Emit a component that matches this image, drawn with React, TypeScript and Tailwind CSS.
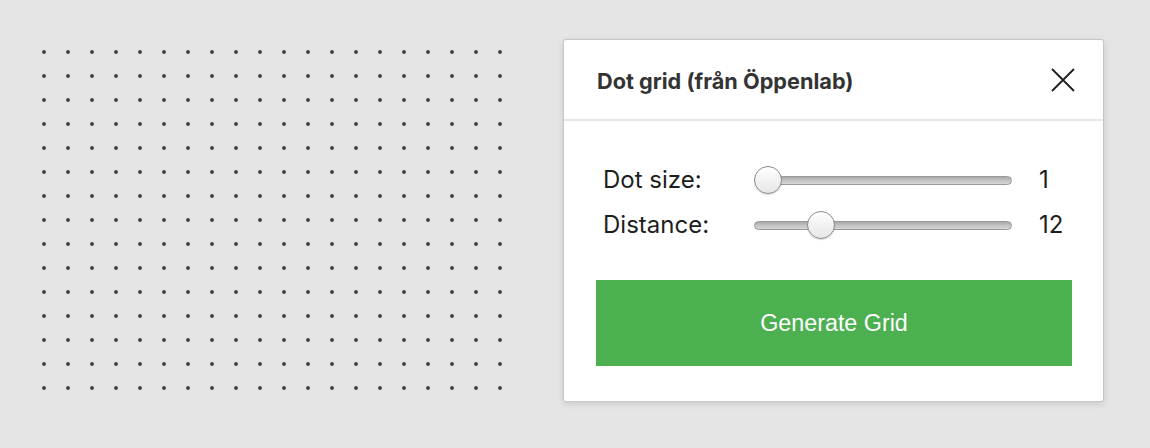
import React from "react";

const COLS = 20;
const ROWS = 15;

function Slider({ offset }: { offset: number }) {
  return (
    <div className="relative w-[258px] h-[28px] flex items-center">
      <div className="w-full h-[9px] rounded-full border border-[#9a9a9a] bg-linear-to-b from-[#a9a9a9] via-[#c4c4c4] to-[#d6d6d6]" />
      <div
        className="absolute top-0 w-[28px] h-[28px] rounded-full border-[1.5px] border-[#8c8c8c] bg-linear-to-b from-[#ffffff] to-[#e6e6e6] shadow-[0_1px_1px_rgba(0,0,0,0.15)]"
        style={{ left: offset }}
      />
    </div>
  );
}

export default function App() {
  const dots = Array.from({ length: COLS * ROWS });
  return (
    <div
      className="w-[1150px] h-[448px] bg-[#e5e5e5] flex items-start overflow-hidden"
      style={{ fontFamily: "Inter, 'Noto Sans', sans-serif" }}
    >
      <div className="pl-[42px] pt-[50px]">
        <div className="grid grid-cols-[repeat(20,24px)] grid-rows-[repeat(15,24px)]">
          {dots.map((_, i) => (
            <div key={i} className="w-[4px] h-[4px] rounded-full bg-[#464646]" />
          ))}
        </div>
      </div>

      <div className="ml-[41px] mt-[39px] w-[541px] h-[363px] bg-white border border-[#c6c6c6] rounded-[3px] shadow-[0_2px_6px_rgba(0,0,0,0.12)] flex flex-col">
        <div className="h-[81px] flex items-center justify-between pl-[33px] pr-[28px] border-b-2 border-[#e6e6e6] shrink-0">
          <div className="text-[21.7px] font-bold text-[#333333] pt-[3px]">
            Dot grid (från Öppenlab)
          </div>
          <svg width="24" height="24" viewBox="0 0 24 24" className="block">
            <path d="M1 1 L23 23 M23 1 L1 23" stroke="#1e1e1e" strokeWidth="1.8" fill="none" />
          </svg>
        </div>

        <div className="px-[32px] pt-[44px]">
          <div className="flex items-center h-[30px] pl-[7px]">
            <div className="w-[151px] text-[24px] text-[#1e1e1e] leading-none">Dot size:</div>
            <Slider offset={0} />
            <div className="ml-[27px] text-[24px] text-[#1e1e1e] leading-none">1</div>
          </div>
          <div className="flex items-center h-[30px] mt-[15px] pl-[7px]">
            <div className="w-[151px] text-[24px] text-[#1e1e1e] leading-none">Distance:</div>
            <Slider offset={53} />
            <div className="ml-[27px] text-[24px] text-[#1e1e1e] leading-none">12</div>
          </div>

          <button
            className="mt-[40px] w-[476px] h-[86px] bg-[#4caf50] text-white text-[23.3px] flex items-center justify-center"
            style={{ fontFamily: "'Liberation Sans', Arial, sans-serif" }}
          >
            Generate Grid
          </button>
        </div>
      </div>
    </div>
  );
}
